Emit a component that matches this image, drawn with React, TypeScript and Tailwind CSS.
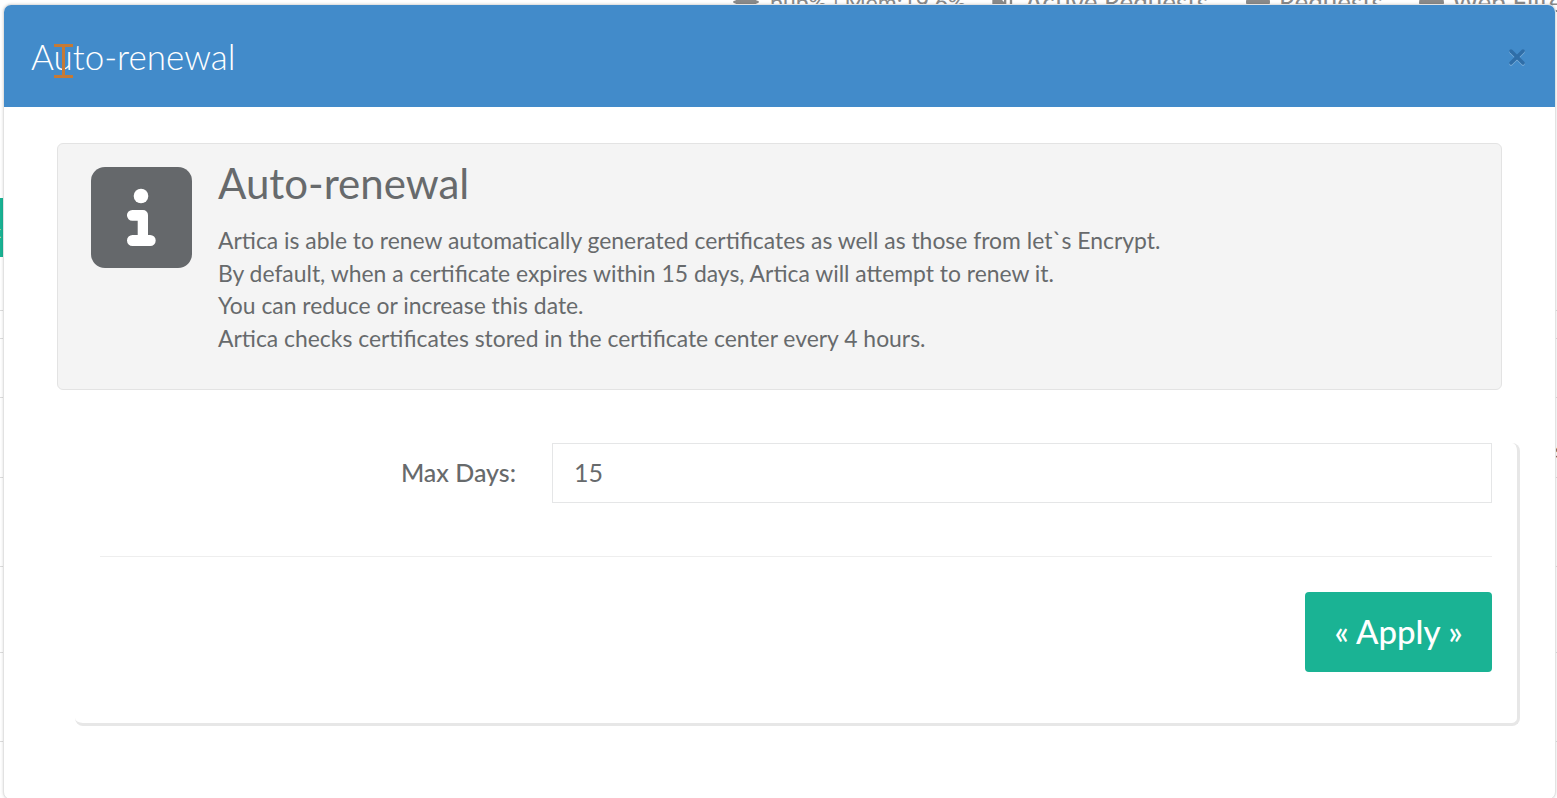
import { BarChart3, Cpu, Globe, X } from 'lucide-react'

const lineTops = ['top-[310px]', 'top-[338px]', 'top-[397px]', 'top-[477px]', 'top-[566px]', 'top-[652px]', 'top-[741px]']

function InfoIcon() {
  return (
    <svg viewBox="0 0 101 101" className="h-[101px] w-[101px] shrink-0">
      <rect x="0" y="0" width="101" height="101" rx="14" fill="#65686b" />
      <circle cx="50" cy="29" r="7.300" fill="#fff" />
      <path
        d="M41.300 43H52a5 5 0 0 1 5 5V68h2.200a5.500 5.500 0 0 1 0 11H41.500a5.500 5.500 0 0 1 0-11h5.200V53.700H41.300a5.350 5.350 0 0 1 0-10.700z"
        fill="#fff"
      />
    </svg>
  )
}

export default function App() {
  return (
    <div className="relative h-screen overflow-hidden bg-white font-['Lato',sans-serif]">
      {/* page behind the modal */}
      <div className="absolute left-[732px] top-[-12px] flex whitespace-nowrap text-[26px] leading-[24px] text-[#8a8a8a]">
        <div className="flex w-[258px] items-center gap-[10px]">
          <Cpu className="h-[28px] w-[28px] fill-[#8a8a8a]" />
          <span className="text-[23px]">pub% | Mem:19.6%</span>
        </div>
        <div className="flex w-[255px] items-center gap-[7px]">
          <BarChart3 className="h-[28px] w-[28px] fill-[#8a8a8a]" />
          <span>Active Requests</span>
        </div>
        <div className="flex w-[173px] items-center gap-[8px]">
          <Globe className="h-[26px] w-[26px] fill-[#8a8a8a]" />
          <span>Requests</span>
        </div>
        <div className="flex items-center gap-[7px]">
          <Globe className="h-[27px] w-[27px] fill-[#8a8a8a]" />
          <span>Web Filtering</span>
        </div>
      </div>
      <div className="absolute left-0 top-[198px] h-[59px] w-[4px] bg-[#1ab394]"></div>
      <span className="absolute left-[-9px] top-[148px] text-[21px] text-[#676a6c]">s</span>
      <span className="absolute left-[-9px] top-[215px] text-[21px] text-white">c</span>
      <span className="absolute left-[1555px] top-[434px] text-[21px] text-[#676a6c]">s</span>
      {lineTops.map((t) => (
        <div key={t} className={`absolute left-0 h-px w-full bg-[#dddddd] ${t}`}></div>
      ))}

      {/* modal */}
      <div className="absolute left-[3px] top-[4px] h-[796px] w-[1553px] rounded-[8px] border border-[#e2e2e2] bg-white shadow-[0_0_3px_rgba(0,0,0,0.15)]">
        <div className="flex h-[102px] items-center justify-between rounded-t-[7px] bg-[#428bca] pl-[27px] pr-[26px]">
          <h4 className="text-[35px] font-light leading-none text-white">Auto-renewal</h4>
          <X className="mb-[-2px] h-[24px] w-[24px] text-[#2f6ea8] drop-shadow-[0_1px_0_rgba(255,255,255,0.3)]" strokeWidth={3.5} />
        </div>

        <div className="pl-[53px] pr-[53px] pt-[36px]">
          <div className="flex h-[247px] gap-[26px] rounded-[6px] border border-[#e3e3e3] bg-[#f4f4f4] pl-[33px] pt-[23px]">
            <InfoIcon />
            <div className="text-[#676a6c]">
              <h2 className="mt-[-7px] text-[42px] font-normal leading-[46px]">Auto-renewal</h2>
              <div className="mt-[18px] text-[22.900px] leading-[32.600px]">
                <p>Artica is able to renew automatically generated certificates as well as those from let`s Encrypt.</p>
                <p>By default, when a certificate expires within 15 days, Artica will attempt to renew it.</p>
                <p>You can reduce or increase this date.</p>
                <p>Artica checks certificates stored in the certificate center every 4 hours.</p>
              </div>
            </div>
          </div>

          <div className="ml-[18px] mr-[-18px] mt-[53px] h-[283px] rounded-[8px] border-b-[3px] border-r-[3px] border-[#e7e7e7] pl-[25px] pr-[25px]">
            <div className="flex items-center">
              <label className="mb-[2px] w-[416px] text-right text-[25px] font-medium leading-none text-[#676a6c]">Max Days:</label>
              <div className="ml-[36px] flex h-[60px] flex-1 items-center border border-[#e5e6e7] bg-white pl-[21px] text-[25px] text-[#676a6c]">
                15
              </div>
            </div>
            <div className="mt-[53px] h-px bg-[#eeeeee]"></div>
            <div className="mt-[35px] flex justify-end">
              <button className="flex h-[80px] w-[187px] items-center justify-center rounded-[4px] bg-[#1ab394] text-[33px] font-medium text-white">
                « Apply »
              </button>
            </div>
          </div>
        </div>
      </div>

      {/* text cursor in the capture */}
      <svg viewBox="0 0 20 34" className="absolute left-[54px] top-[44px] h-[34px] w-[20px]">
        <path d="M0 1.500h19M9.500 1.500v31M0 32.500h19" stroke="#c57a35" strokeWidth="3" fill="none" />
      </svg>
    </div>
  )
}
